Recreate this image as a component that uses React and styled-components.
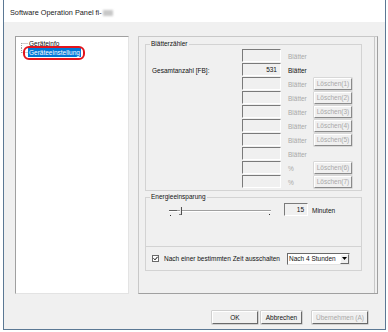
import React from 'react';
import styled, { createGlobalStyle } from 'styled-components';

const GlobalStyle = createGlobalStyle`
  html, body { margin: 0; padding: 0; background: #fff; }
  body {
    font-family: "Liberation Sans", Arial, sans-serif;
    font-size: 6.5px;
    color: #111;
  }
  * { box-sizing: border-box; }
`;

const Window = styled.div`
  margin-left: 3px;
  width: 383px;
  height: 330px;
  border: 1px solid #5b7894;
  border-top: none;
  display: flex;
  flex-direction: column;
`;

const TitleBar = styled.div`
  height: 22px;
  background: #fff;
  display: flex;
  align-items: center;
  padding: 3px 0 0 6px;
  font-size: 7.3px;
  color: #1a1a1a;
`;

const Redacted = styled.span`
  display: inline-block;
  width: 10px;
  height: 6px;
  margin-left: 1px;
  background: #c8c8c8;
  filter: blur(1.2px);
`;

const Body = styled.div`
  flex: 1;
  background: #f0f0f0;
  display: flex;
  flex-direction: column;
  padding: 14px 7px 0 11px;
`;

const Main = styled.div`
  display: flex;
  gap: 9px;
  height: 258px;
`;

const Tree = styled.div`
  width: 114px;
  background: #fff;
  border: 1px solid;
  border-color: #a0a0a0 #e3e3e3 #e3e3e3 #a0a0a0;
  padding: 2px 0 0 4px;
`;

const TreeItem = styled.div`
  display: flex;
  align-items: center;
  height: 9px;
  line-height: 9px;
`;

const Label = styled.span`
  padding: 0 1px;
  background: ${p => (p.$selected ? '#0078d7' : 'transparent')};
  color: ${p => (p.$selected ? '#fff' : '#111')};
  position: relative;
  ${p =>
    p.$selected &&
    `&::after {
      content: '';
      position: absolute;
      left: -5px; right: -4px; top: -2px; bottom: -3px;
      border: 2px solid #e3141c;
      border-radius: 6px;
    }`}
`;

const Connector = ({ first }) => (
  <svg width="8" height="9" style={{ display: 'block' }}>
    <g stroke="#a0a0a0" strokeWidth="1" strokeDasharray="1 1">
      {first ? (
        <line x1="1.5" y1="4" x2="1.5" y2="9" />
      ) : (
        <line x1="1.5" y1="0" x2="1.5" y2="5" />
      )}
      <line x1="1.5" y1="4.5" x2="8" y2="4.5" />
    </g>
  </svg>
);

const Panel = styled.div`
  width: 240px;
  border: 1px solid;
  border-color: #c8c8c8 #a0a0a0 #a0a0a0 #c8c8c8;
  box-shadow: inset -2px 0 0 #f0f0f0, inset -3px 0 0 #c8c8c8;
  padding: 7px 15px 0 6px;
  display: flex;
  flex-direction: column;
  gap: 6px;
`;

const Group = styled.div`
  position: relative;
  border: 1px solid #d3d3d3;
  height: ${p => p.$h}px;
  display: flex;
  flex-direction: column;
`;

const Legend = styled.span`
  position: absolute;
  top: -5px;
  left: 4px;
  padding: 0 1px;
  line-height: 8px;
  background: #f0f0f0;
`;

const CounterRows = styled.div`
  padding: 4px 0 0 6px;
  display: flex;
  flex-direction: column;
`;

const Row = styled.div`
  display: grid;
  grid-template-columns: 90px 39px 33px 38px;
  align-items: center;
  height: 14px;
`;

const Field = styled.div`
  height: 13px;
  width: ${p => p.$w || 39}px;
  margin-left: ${p => p.$ml || 0}px;
  border: 1px solid;
  border-color: #7a7a7a #fff #fff #7a7a7a;
  background: #f0f0f0;
  text-align: right;
  padding-right: 3px;
  line-height: 11px;
  align-self: start;
`;

const Unit = styled.span`
  padding-left: 7px;
  color: ${p => (p.$disabled ? '#a8a8a8' : '#111')};
`;

const SmallButton = styled.div`
  height: 12px;
  border: 1px solid;
  border-color: #fff #8a8a8a #8a8a8a #fff;
  box-shadow: 0 0 0 0.5px #c0c0c0;
  background: #f0f0f0;
  color: #a8a8a8;
  text-align: center;
  line-height: 10px;
`;

const SliderRow = styled.div`
  display: flex;
  align-items: center;
  height: 14px;
  margin-top: 5px;
  padding-left: 17px;
`;

const Minutes = styled.span`
  margin-left: 4px;
`;

const Divider = styled.div`
  height: 1px;
  background: #d3d3d3;
  margin-top: 29px;
`;

const CheckRow = styled.div`
  flex: 1;
  display: flex;
  align-items: center;
  padding: 0 11px 0 6px;
`;

const CheckBox = styled.span`
  width: 7px;
  height: 7px;
  border: 1px solid #6a6a6a;
  background: #fff;
  display: inline-flex;
  align-items: center;
  justify-content: center;
`;

const CheckText = styled.span`
  margin-left: 5px;
`;

const Select = styled.div`
  margin-left: auto;
  width: 63px;
  height: 12px;
  border: 1px solid;
  border-color: #6a6a6a #e3e3e3 #e3e3e3 #6a6a6a;
  background: #fff;
  display: flex;
  align-items: center;
  padding-left: 1px;
  line-height: 10px;
`;

const SelectText = styled.span`
  flex: 1;
`;

const ArrowBtn = styled.span`
  width: 9px;
  height: 10px;
  border: 1px solid;
  border-color: #fff #6a6a6a #6a6a6a #fff;
  background: #f0f0f0;
  display: flex;
  align-items: center;
  justify-content: center;
`;

const Footer = styled.div`
  display: flex;
  justify-content: flex-end;
  margin-top: 17px;
  padding-right: 10px;
`;

const Button = styled.div`
  width: ${p => p.$w}px;
  margin-left: ${p => p.$ml || 0}px;
  height: 13px;
  border: 1px solid;
  border-color: #fff #6a6a6a #6a6a6a #fff;
  box-shadow: 0 0 0 0.5px #b0b0b0;
  background: #f0f0f0;
  color: ${p => (p.$disabled ? '#a8a8a8' : '#111')};
  text-align: center;
  line-height: 11px;
`;

const rows = [
  { v: '', unit: 'Blätter', dis: true },
  { label: 'Gesamtanzahl [FB]:', v: '531', unit: 'Blätter', dis: false },
  { v: '', unit: 'Blätter', dis: true, btn: 'Löschen(1)' },
  { v: '', unit: 'Blätter', dis: true, btn: 'Löschen(2)' },
  { v: '', unit: 'Blätter', dis: true, btn: 'Löschen(3)' },
  { v: '', unit: 'Blätter', dis: true, btn: 'Löschen(4)' },
  { v: '', unit: 'Blätter', dis: true, btn: 'Löschen(5)' },
  { v: '', unit: 'Blätter', dis: true },
  { v: '', unit: '%', dis: true, btn: 'Löschen(6)' },
  { v: '', unit: '%', dis: true, btn: 'Löschen(7)' },
];

const Slider = () => (
  <svg width="114" height="14" style={{ display: 'block' }}>
    <line x1="6" y1="7.5" x2="108" y2="7.5" stroke="#a0a0a0" />
    <line x1="6" y1="8.5" x2="108" y2="8.5" stroke="#ffffff" />
    <line x1="6" y1="7.5" x2="14" y2="7.5" stroke="#606060" />
    <line x1="17.5" y1="4" x2="17.5" y2="12" stroke="#e8e8e8" />
    <line x1="18.5" y1="4" x2="18.5" y2="12" stroke="#505050" />
    <line x1="16" y1="11.5" x2="18" y2="11.5" stroke="#808080" />
    <rect x="7" y="12" width="1" height="1" fill="#333" />
    <rect x="106" y="11" width="1" height="1" fill="#333" />
  </svg>
);

export default function App() {
  return (
    <>
      <GlobalStyle />
      <Window>
        <TitleBar>
          Software Operation Panel fi-<Redacted />
        </TitleBar>
        <Body>
          <Main>
            <Tree>
              <TreeItem>
                <Connector first />
                <Label>Geräteinfo</Label>
              </TreeItem>
              <TreeItem>
                <Connector />
                <Label $selected>Geräteeinstellung</Label>
              </TreeItem>
            </Tree>
            <Panel>
              <Group $h={147}>
                <Legend>Blätterzähler</Legend>
                <CounterRows>
                  {rows.map((r, i) => (
                    <Row key={i}>
                      <span>{r.label || ''}</span>
                      <Field>{r.v}</Field>
                      <Unit $disabled={r.dis}>{r.unit}</Unit>
                      {r.btn ? <SmallButton>{r.btn}</SmallButton> : <span />}
                    </Row>
                  ))}
                </CounterRows>
              </Group>
              <Group $h={74}>
                <Legend>Energieeinsparung</Legend>
                <SliderRow>
                  <Slider />
                  <Field $w={24} $ml={7}>15</Field>
                  <Minutes>Minuten</Minutes>
                </SliderRow>
                <Divider />
                <CheckRow>
                  <CheckBox>
                    <svg width="5" height="5" viewBox="0 0 5 5">
                      <path d="M0.5 2.3 L2 3.8 L4.6 0.8" fill="none" stroke="#000" strokeWidth="1" />
                    </svg>
                  </CheckBox>
                  <CheckText>Nach einer bestimmten Zeit ausschalten</CheckText>
                  <Select>
                    <SelectText>Nach 4 Stunden</SelectText>
                    <ArrowBtn>
                      <svg width="5" height="3" viewBox="0 0 5 3">
                        <path d="M0 0 H5 L2.5 3 Z" fill="#000" />
                      </svg>
                    </ArrowBtn>
                  </Select>
                </CheckRow>
              </Group>
            </Panel>
          </Main>
          <Footer>
            <Button $w={46}>OK</Button>
            <Button $w={41} $ml={3}>Abbrechen</Button>
            <Button $w={56} $ml={10} $disabled>Übernehmen (A)</Button>
          </Footer>
        </Body>
      </Window>
    </>
  );
}
